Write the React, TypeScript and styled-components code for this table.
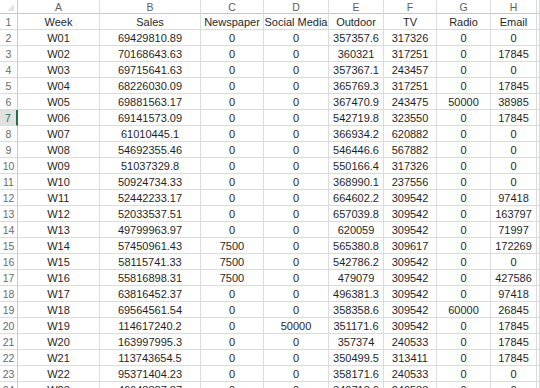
import { Fragment } from 'react';
import styled, { createGlobalStyle } from 'styled-components';

const GlobalStyle = createGlobalStyle`
    html, body {
        margin: 0;
        padding: 0;
        background: #ffffff;
        overflow: hidden;
    }
`;

const columns = ['A', 'B', 'C', 'D', 'E', 'F', 'G', 'H', ''];

const rows: string[][] = [
    ['Week', 'Sales', 'Newspaper', 'Social Media', 'Outdoor', 'TV', 'Radio', 'Email'],
    ['W01', '69429810.89', '0', '0', '357357.6', '317326', '0', '0'],
    ['W02', '70168643.63', '0', '0', '360321', '317251', '0', '17845'],
    ['W03', '69715641.63', '0', '0', '357367.1', '243457', '0', '0'],
    ['W04', '68226030.09', '0', '0', '365769.3', '317251', '0', '17845'],
    ['W05', '69881563.17', '0', '0', '367470.9', '243475', '50000', '38985'],
    ['W06', '69141573.09', '0', '0', '542719.8', '323550', '0', '17845'],
    ['W07', '61010445.1', '0', '0', '366934.2', '620882', '0', '0'],
    ['W08', '54692355.46', '0', '0', '546446.6', '567882', '0', '0'],
    ['W09', '51037329.8', '0', '0', '550166.4', '317326', '0', '0'],
    ['W10', '50924734.33', '0', '0', '368990.1', '237556', '0', '0'],
    ['W11', '52442233.17', '0', '0', '664602.2', '309542', '0', '97418'],
    ['W12', '52033537.51', '0', '0', '657039.8', '309542', '0', '163797'],
    ['W13', '49799963.97', '0', '0', '620059', '309542', '0', '71997'],
    ['W14', '57450961.43', '7500', '0', '565380.8', '309617', '0', '172269'],
    ['W15', '58115741.33', '7500', '0', '542786.2', '309542', '0', '0'],
    ['W16', '55816898.31', '7500', '0', '479079', '309542', '0', '427586'],
    ['W17', '63816452.37', '0', '0', '496381.3', '309542', '0', '97418'],
    ['W18', '69564561.54', '0', '0', '358358.6', '309542', '60000', '26845'],
    ['W19', '114617240.2', '0', '50000', '351171.6', '309542', '0', '17845'],
    ['W20', '163997995.3', '0', '0', '357374', '240533', '0', '17845'],
    ['W21', '113743654.5', '0', '0', '350499.5', '313411', '0', '17845'],
    ['W22', '95371404.23', '0', '0', '358171.6', '240533', '0', '0'],
    ['W23', '46648887.87', '0', '0', '340713.6', '240533', '0', '0'],
];

const SELECTED_ROW = 7;

const Sheet = styled.div`
    display: grid;
    grid-template-columns: 18px 82px 101px 63px 65px 55px 53px 54px 46px 3px;
    grid-template-rows: 14px;
    grid-auto-rows: 16px;
    font-family: 'Liberation Sans', Arial, sans-serif;
    font-size: 11px;
    color: #1f1f1f;
    width: 540px;
    height: 388px;
    overflow: hidden;
`;

const Cell = styled.div`
    box-sizing: border-box;
    border-right: 1px solid #dadcdd;
    border-bottom: 1px solid #dadcdd;
    display: flex;
    align-items: center;
    justify-content: center;
    white-space: nowrap;
    overflow: hidden;
`;

const ColHeader = styled(Cell)`
    color: #5e5e5e;
    border-bottom-color: #c8c8c8;
    font-size: 10.5px;
`;

const Corner = styled(Cell)`
    position: relative;
    border-bottom-color: #c8c8c8;
    border-right-color: #c8c8c8;
`;

const CornerMark = styled.span`
    position: absolute;
    right: 3px;
    bottom: 2px;
    width: 0;
    height: 0;
    border-left: 7px solid transparent;
    border-bottom: 7px solid #e3e3e3;
`;

const RowHeader = styled(Cell)<{ selected?: boolean }>`
    color: ${(p) => (p.selected ? '#217346' : '#6a6a6a')};
    background: ${(p) => (p.selected ? '#e1e1e1' : '#ffffff')};
    border-right: ${(p) => (p.selected ? '2px solid #217346' : '1px solid #c8c8c8')};
    font-size: 10.5px;
`;

export default function App() {
    return (
        <>
            <GlobalStyle />
            <Sheet>
                <Corner>
                    <CornerMark />
                </Corner>
                {columns.map((c, i) => (
                    <ColHeader key={i}>{c}</ColHeader>
                ))}
                {rows.map((row, r) => (
                    <Fragment key={r}>
                        <RowHeader selected={r + 1 === SELECTED_ROW}>{r + 1}</RowHeader>
                        {row.map((v, c) => (
                            <Cell key={c}>{v}</Cell>
                        ))}
                        <Cell />
                    </Fragment>
                ))}
            </Sheet>
        </>
    );
}
